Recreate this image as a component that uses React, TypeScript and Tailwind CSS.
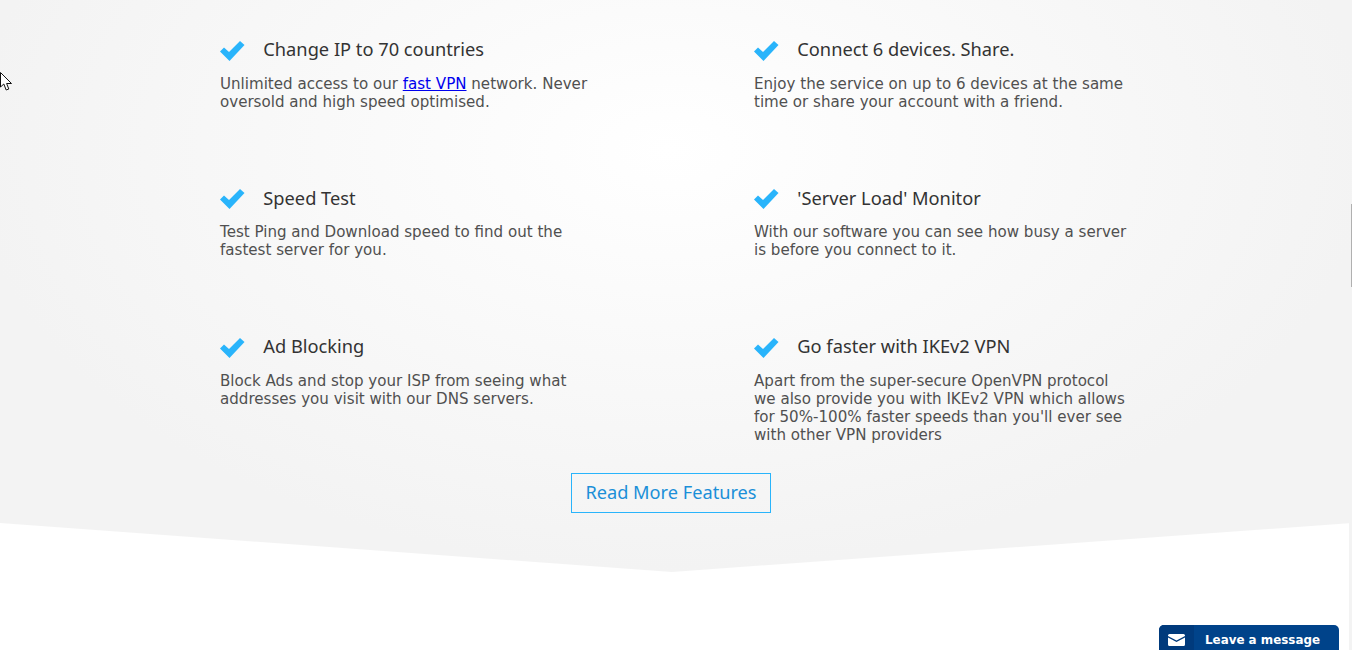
const Check = () => (
  <svg width="25" height="22" viewBox="1 0 25 22" className="mt-[3px] shrink-0">
    <path d="M1 11.5 L5 7.5 L10 12 L21 1 L25.5 5 L10.5 21 Z" fill="#29b4fb" />
  </svg>
);

const Feature = ({ title, children }: { title: string; children: React.ReactNode }) => (
  <div className="w-[380px]">
    <div className="flex items-center h-[24px]">
      <Check />
      <h3 className="ml-[18.3px] text-[18.25px] leading-[24px] text-[#333] font-['Noto_Sans',sans-serif]">{title}</h3>
    </div>
    <p className="mt-[13.75px] w-[377px] text-[15.08px] leading-[18px] text-[#505050] font-['DejaVu_Sans',sans-serif]">{children}</p>
  </div>
);

export default function App() {
  return (
    <div className="relative h-[650px] w-[1352px] overflow-hidden bg-white">
      <section className="h-[572px] pt-[37px] bg-[radial-gradient(ellipse_700px_420px_at_670px_150px,#ffffff_0%,#f3f3f3_100%)] [clip-path:polygon(0_0,100%_0,100%_523px,672px_572px,0_523px)]">
        <div className="ml-[220px] grid grid-cols-[534px_380px] auto-rows-min">
          <div className="h-[148.5px]"><Feature title="Change IP to 70 countries">Unlimited access to our <a href="#" className="text-[#0000ee] underline">fast VPN</a> network. Never oversold and high speed optimised.</Feature></div>
          <div className="h-[148.5px]"><Feature title="Connect 6 devices. Share.">Enjoy the service on up to 6 devices at the same time or share your account with a friend.</Feature></div>
          <div className="h-[148.5px]"><Feature title="Speed Test">Test Ping and Download speed to find out the fastest server for you.</Feature></div>
          <div className="h-[148.5px]"><Feature title="'Server Load' Monitor">With our software you can see how busy a server is before you connect to it.</Feature></div>
          <Feature title="Ad Blocking">Block Ads and stop your ISP from seeing what addresses you visit with our DNS servers.</Feature>
          <Feature title="Go faster with IKEv2 VPN">Apart from the super-secure OpenVPN protocol we also provide you with IKEv2 VPN which allows for 50%-100% faster speeds than you'll ever see with other VPN providers</Feature>
        </div>
        <div className="mt-[29.25px] flex justify-center pr-[10px]">
          <a href="#" className="flex h-[40px] w-[200px] items-center justify-center border border-[#29b4fb] pb-[1px] text-[18.2px] text-[#1b8fd8] font-['Noto_Sans',sans-serif]">Read More Features</a>
        </div>
      </section>

      <svg width="14" height="22" viewBox="0 0 14 22" className="absolute left-0 top-[72px]">
        <path d="M0.5 0.5 L0.5 15 L3.8 12 L6.2 18 L8.8 17 L6.6 11.5 L11.5 11.5 Z" fill="#fff" stroke="#111" strokeWidth="1" />
      </svg>

      <div className="absolute right-0 top-[523px] h-[127px] w-[3px] bg-[#f3f3f3]" />
      <div className="absolute right-0 top-[204px] h-[83px] w-[1px] bg-[#b0b0b0]" />

      <div className="absolute left-[1159px] top-[625px] flex h-[25px] w-[180px] overflow-hidden rounded-t-[5px] bg-[#00438a]">
        <div className="flex w-[35px] items-start justify-center bg-[#003a7c] pt-[9px]">
          <svg width="17" height="12" viewBox="0 0 17 12">
            <path d="M1.5 0 H15.5 Q17 0 17 1.5 V2 L8.5 6.5 L0 2 V1.5 Q0 0 1.5 0 Z M0 3.5 L8.5 8 L17 3.5 V10.5 Q17 12 15.5 12 H1.5 Q0 12 0 10.5 Z" fill="#fff" />
          </svg>
        </div>
        <span className="ml-[11px] text-[11.9px] leading-[30px] font-bold text-white font-['DejaVu_Sans',sans-serif]">Leave a message</span>
      </div>
    </div>
  );
}
